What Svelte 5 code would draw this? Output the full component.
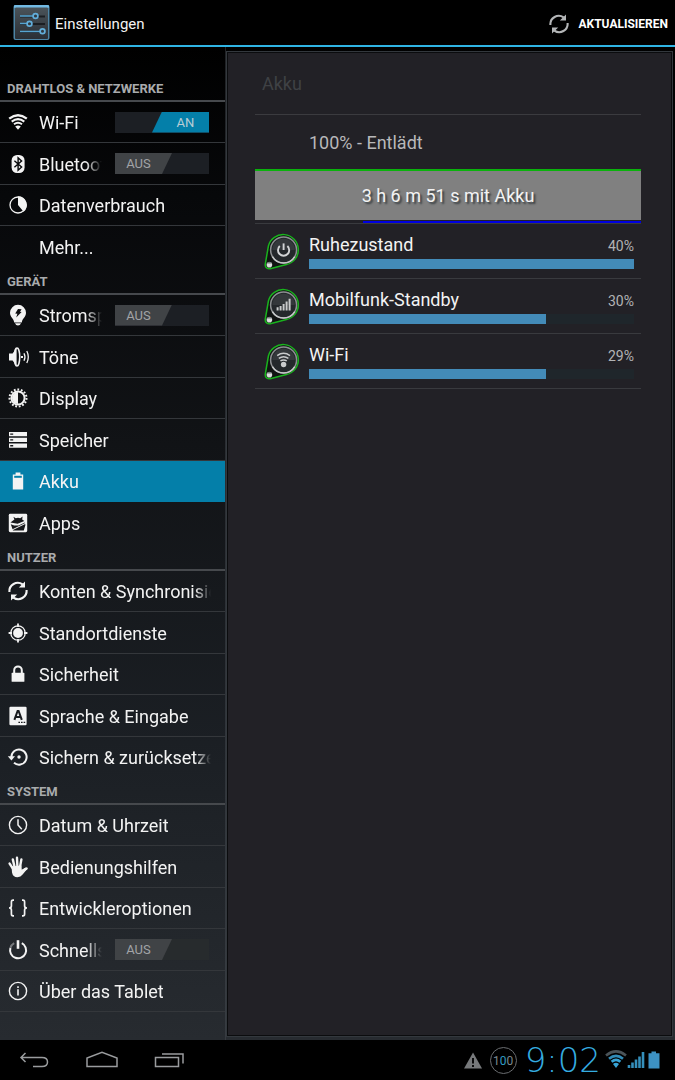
<script>
  let sections = $state([
    {
      title: 'DRAHTLOS & NETZWERKE',
      items: [
        { icon: 'wifi', label: 'Wi-Fi', on: true },
        { icon: 'bluetooth', label: 'Bluetooth', on: false },
        { icon: 'data', label: 'Datenverbrauch' },
        { icon: '', label: 'Mehr...' }
      ]
    },
    {
      title: 'GERÄT',
      items: [
        { icon: 'bulb', label: 'Stromsparen', on: false },
        { icon: 'sound', label: 'Töne' },
        { icon: 'display', label: 'Display' },
        { icon: 'storage', label: 'Speicher' },
        { icon: 'battery', label: 'Akku', active: true },
        { icon: 'apps', label: 'Apps' }
      ]
    },
    {
      title: 'NUTZER',
      items: [
        { icon: 'sync', label: 'Konten & Synchronisierung' },
        { icon: 'location', label: 'Standortdienste' },
        { icon: 'lock', label: 'Sicherheit' },
        { icon: 'language', label: 'Sprache & Eingabe' },
        { icon: 'restore', label: 'Sichern & zurücksetzen' }
      ]
    },
    {
      title: 'SYSTEM',
      items: [
        { icon: 'clock', label: 'Datum & Uhrzeit' },
        { icon: 'hand', label: 'Bedienungshilfen' },
        { icon: 'braces', label: 'Entwickleroptionen' },
        { icon: 'power', label: 'Schnellstart', on: false, dim: true },
        { icon: 'info', label: 'Über das Tablet' }
      ]
    }
  ]);

  const usage = [
    { icon: 'power', label: 'Ruhezustand', percent: '40%', width: 100 },
    { icon: 'signal', label: 'Mobilfunk-Standby', percent: '30%', width: 73 },
    { icon: 'wifi', label: 'Wi-Fi', percent: '29%', width: 73 }
  ];
</script>

{#snippet syncArrows()}
  <g fill="none" stroke="currentColor" stroke-width="2.1">
    <path d="M1.4 11A8.4 8.4 0 0 1 14.6 3.4" />
    <path d="M18.6 9A8.4 8.4 0 0 1 5.4 16.6" />
  </g>
  <path d="M17 0.4v6.2h-6.2z M3 19.6v-6.2h6.2z" fill="currentColor" />
{/snippet}

{#snippet menuIcon(name)}
  <svg class="icon" viewBox="0 0 20 20" aria-hidden="true">
    {#if name === 'wifi'}
      <g fill="none" stroke="currentColor">
        <path d="M1.2 6.6Q10 0 18.8 6.6" stroke-width="2.4" />
        <path d="M3.7 9.6Q10 4.6 16.3 9.6" stroke-width="2" />
        <path d="M6 12.3Q10 9.2 14 12.3" stroke-width="2" />
      </g>
      <path d="M7.2 14.6Q10 12.4 12.8 14.6L10 17.8z" fill="currentColor" />
    {:else if name === 'bluetooth'}
      <rect x="3.6" y="1" width="13" height="18" rx="5.4" fill="currentColor" />
      <path d="M6.4 6.8l7.2 6.2-3.5 3.2V3.8l3.5 3.2-7.2 6.2" fill="none" stroke="#08090b" stroke-width="1.4" />
    {:else if name === 'data'}
      <circle cx="10" cy="10" r="8" fill="none" stroke="currentColor" stroke-width="1.3" />
      <path d="M10 10V1.2A8.800 8.800 0 0 1 15.600 16.800z" fill="currentColor" />
    {:else if name === 'bulb'}
      <path d="M10 -0.2A8 8 0 0 0 2 7.8C2 12 5.8 13.6 6.2 17.4H13.8C14.2 13.6 18 12 18 7.8A8 8 0 0 0 10 -0.2z M7 18.2H13Q12.2 20.400 10 20.400T7 18.200z" fill="currentColor" />
      <path d="M10 4l3.600 0.200-1.600 2.600 1.600 0.200-5.400 5.600 1.200-3.800-2.200-0.400z" fill="#0d0e10" />
    {:else if name === 'sound'}
      <path d="M1 6.4h3.6L8.6 1v18L4.6 13.6H1z" fill="currentColor" />
      <ellipse cx="9" cy="10" rx="2.7" ry="9" fill="none" stroke="currentColor" stroke-width="1.5" />
      <rect x="13" y="9" width="2" height="2" fill="currentColor" />
      <path d="M16 6.200Q18 10 16 13.800M18.800 4Q21.800 10 18.800 16" fill="none" stroke="currentColor" stroke-width="1.300" />
    {:else if name === 'display'}
      <circle cx="10" cy="10" r="8.500" fill="none" stroke="currentColor" stroke-width="2" stroke-dasharray="1.800 1.760" />
      <circle cx="10" cy="10" r="6.600" fill="none" stroke="currentColor" stroke-width="2" />
      <path d="M10 4a6 6 0 0 0 0 12z" fill="currentColor" />
    {:else if name === 'storage'}
      <path d="M1 2h18v4.200H1zM1 7.800h18V12H1zM1 13.600h18v4.200H1z" fill="currentColor" />
      <path d="M2.200 4.100h3M2.200 9.900h3M2.200 15.700h3" stroke="#141518" stroke-width="1.400" />
    {:else if name === 'battery'}
      <path d="M7.600 1.600h4.800v1.800h2.800v15H4.800v-15h2.800z" fill="currentColor" />
      <path d="M6.200 4.800h7.600v2H6.200z" fill="#0480a8" />
    {:else if name === 'apps'}
      <rect x="0.800" y="0.800" width="18.400" height="18.400" rx="1.400" fill="currentColor" />
      <path d="M2.400 9.400L6.400 6.400 5.400 3.800 7.800 5.200Q10 4.200 12.200 5.200L14.600 3.400 14.200 6.400 16.400 8 9.600 10.800z" fill="#17181b" />
      <path d="M2.800 11.200l3.400 1.400L10.600 12.400 16.800 9.400 17.400 12 15.800 17.600H5z" fill="#17181b" />
      <path d="M2.800 17.600L17.400 10.400" stroke="currentColor" stroke-width="1" />
    {:else if name === 'sync'}
      {@render syncArrows()}
    {:else if name === 'location'}
      <circle cx="10" cy="10" r="4.900" fill="currentColor" />
      <circle cx="10" cy="10" r="7.200" fill="none" stroke="currentColor" stroke-width="1.300" />
      <path d="M10 0.600V4M10 16v3.400M0.600 10H4M16 10h3.400" stroke="currentColor" stroke-width="1.800" />
    {:else if name === 'lock'}
      <path d="M6.200 10V6.200a3.800 3.800 0 0 1 7.600 0V10" fill="none" stroke="currentColor" stroke-width="2" />
      <rect x="3.600" y="8.800" width="12.800" height="9" rx="0.600" fill="currentColor" />
    {:else if name === 'language'}
      <rect x="1.400" y="0.800" width="17.200" height="18.400" rx="1.200" fill="currentColor" />
      <path d="M6.400 13.800L9.600 5h1L13.800 13.800M7.600 11h5" fill="none" stroke="#191b1f" stroke-width="2" />
      <path d="M10.400 16.400h1.600M13 16.400h1.600M15.600 16.400h1.600" stroke="#191b1f" stroke-width="1.400" />
    {:else if name === 'restore'}
      <path d="M3.400 10A7.600 7.600 0 1 1 6 15.800" fill="none" stroke="currentColor" stroke-width="2" />
      <path d="M-0.200 9.200h7.200L3.400 13.400z" fill="currentColor" />
      <circle cx="11" cy="10" r="1.700" fill="currentColor" />
    {:else if name === 'clock'}
      <circle cx="10" cy="10" r="8.600" fill="none" stroke="currentColor" stroke-width="1.400" />
      <path d="M10 4.200V10l3.800 4.200" fill="none" stroke="currentColor" stroke-width="1.500" />
    {:else if name === 'hand'}
      <g fill="none" stroke="currentColor" stroke-width="2.400" stroke-linecap="round">
        <path d="M5.200 12L1.600 6.600M6.600 10L4.800 2.400M9.400 9.600L9 0.800M12 10L13.400 2.400M14.600 14L18.600 11.400" />
      </g>
      <path d="M3.600 9.400L13.400 8.400 13.800 12.800 17.600 10.400 19.200 12 14.600 17.600Q12.800 20.200 9.400 20.200 5 20.200 4 15.400z" fill="currentColor" />
    {:else if name === 'braces'}
      <path d="M6 2.200H5Q3.400 2.200 3.400 4v4Q3.400 10 1 10 3.400 10 3.400 12v4Q3.400 17.800 5 17.800H6M14 2.200h1Q16.600 2.200 16.600 4v4Q16.600 10 19 10 16.600 10 16.600 12v4Q16.600 17.800 15 17.800H14" fill="none" stroke="currentColor" stroke-width="1.700" />
    {:else if name === 'power'}
      <path d="M13.800 3.200A8 8 0 1 1 2.400 8" fill="none" stroke="currentColor" stroke-width="2" />
      <path d="M2.400 8A8 8 0 0 1 6.200 3.200" fill="none" stroke="currentColor" stroke-width="2" opacity="0.400" />
      <path d="M10 0.200v8.600" stroke="currentColor" stroke-width="2.600" />
    {:else if name === 'info'}
      <circle cx="10" cy="10" r="8.600" fill="none" stroke="currentColor" stroke-width="1.400" />
      <path d="M10 8.200v6.200M10 5.200v1.800" stroke="currentColor" stroke-width="1.600" />
    {/if}
  </svg>
{/snippet}

<div class="screen">
  <header class="bar">
    <svg class="logo" viewBox="0 0 37 37" aria-hidden="true">
      <defs>
        <linearGradient id="plate" x1="0" y1="0" x2="0" y2="1">
          <stop offset="0" stop-color="#4a5359" />
          <stop offset="1" stop-color="#2a2f35" />
        </linearGradient>
      </defs>
      <rect x="0.500" y="1" width="36" height="35" rx="2" fill="#4d84a4" />
      <rect x="1" y="1" width="35" height="3" rx="1" fill="#72b9e2" />
      <rect x="2" y="3.500" width="33" height="31.500" rx="1" fill="url(#plate)" />
      <path d="M7 12.500h25M7 20h25M7 28h25" stroke="#1b1e22" stroke-width="2" />
      <path d="M7 12h15M7 19.500h9M7 27.500h21" stroke="#56a5d2" stroke-width="1.500" />
      <g fill="#303940" stroke="#62aeda" stroke-width="1.700">
        <circle cx="22.500" cy="12" r="2.400" />
        <circle cx="16.500" cy="19.800" r="2.400" />
        <circle cx="29.500" cy="27.200" r="2.400" />
      </g>
    </svg>
    <h1>Einstellungen</h1>
    <button class="refresh" type="button">
      <svg viewBox="0 0 20 20" aria-hidden="true">{@render syncArrows()}</svg>
      AKTUALISIEREN
    </button>
  </header>

  <div class="body">
    <nav class="menu">
      {#each sections as section}
        <h2>{section.title}</h2>
        <ul>
          {#each section.items as item}
            <li class:active={item.active}>
              <a href="#{item.label}" aria-current={item.active ? 'page' : undefined}>
                {@render menuIcon(item.icon)}
                <span class="name">{item.label}</span>
              </a>
              {#if item.on !== undefined}
                <label class="switch" class:on={item.on} class:dim={item.dim}>
                  <input type="checkbox" role="switch" aria-label={item.label} bind:checked={item.on} />
                  <span>{item.on ? 'AN' : 'AUS'}</span>
                </label>
              {/if}
            </li>
          {/each}
        </ul>
      {/each}
    </nav>

    <main class="panel">
      <h2>Akku</h2>
      <p class="state">100% - Entlädt</p>
      <div class="chart">
        <div class="area">3 h 6 m 51 s mit Akku</div>
        <div class="trace"></div>
      </div>
      <ul class="usage">
        {#each usage as entry}
          <li>
            <svg class="badge" viewBox="0 0 36 38" aria-hidden="true">
              <path d="M1.200 31.500L4.400 13A15.200 15.200 0 1 1 22.400 31.600L6.200 35.700A4 4 0 0 1 1.200 31.500z" fill="#101312" stroke="#19b21d" stroke-width="1.500" />
              <circle cx="19.600" cy="17" r="13" fill="#24282b" stroke="#8d9092" stroke-width="1.500" />
              <path d="M8.400 23.600A13 13 0 0 0 30.800 23.600" fill="none" stroke="#c6c8c9" stroke-width="1.500" />
              <path d="M8.400 17a11.200 11.200 0 0 1 22.400 0z" fill="#34383b" />
              <circle cx="5.400" cy="31.800" r="2.800" fill="#dcdede" />
              <path d="M2.800 30.600a2.800 2.800 0 0 1 5.200 0z" fill="#777b7d" />
              {#if entry.icon === 'power'}
                <path d="M15.800 13a5.600 5.600 0 1 0 7.600 0" fill="none" stroke="#d2d4d5" stroke-width="1.900" />
                <path d="M19.600 10.400v6.600" stroke="#d2d4d5" stroke-width="1.900" />
              {:else if entry.icon === 'signal'}
                <path d="M13.600 22.500v-3.300M16.600 22.500v-4.600M19.600 22.500v-6.400M22.600 22.500v-9M25.600 22.500V10.700" stroke="#c9cbcc" stroke-width="2" />
              {:else}
                <g fill="none" stroke="#c9cbcc" stroke-width="1.500">
                  <path d="M13.200 12.600Q19.600 8 26 12.600M14.800 15.400Q19.600 12 24.400 15.400M16.400 18Q19.600 15.800 22.800 18" />
                </g>
                <circle cx="19.600" cy="21.500" r="2.700" fill="#c9cbcc" />
              {/if}
            </svg>
            <div class="info">
              <div class="line"><span>{entry.label}</span><span class="percent">{entry.percent}</span></div>
              <div class="track"><div class="fill" style="width: {entry.width}%"></div></div>
            </div>
          </li>
        {/each}
      </ul>
    </main>
  </div>

  <footer class="system">
    <button type="button" aria-label="Zurück">
      <svg viewBox="0 0 32 20"><path d="M7.500 3L3 7.500 7.500 12M3 7.500H24Q29.500 7.500 29.500 12T24 16.500H15" /></svg>
    </button>
    <button type="button" aria-label="Startseite">
      <svg viewBox="0 0 32 20"><path d="M1 16.500V8L16 2.300 31 8V16.500z" /></svg>
    </button>
    <button type="button" aria-label="Letzte Apps">
      <svg viewBox="0 0 32 20"><path d="M1.500 7.500H24.500V16.500H1.500zM8 4H29V13.500" /></svg>
    </button>
    <div class="tray">
      <svg class="warn" viewBox="0 0 18 17" aria-hidden="true">
        <path d="M9 0.500L18 16.500H0z" fill="#77797b" />
        <path d="M9 6v5.500M9 13v2" stroke="#000" stroke-width="1.800" />
      </svg>
      <span class="level">1<b>0</b>0</span>
      <time>9:02</time>
      <svg class="net" viewBox="0 0 56 20" aria-hidden="true">
        <g fill="none" stroke-width="2.600">
          <path d="M1 5.400Q11 -2.600 21 5.400" stroke="#4a5358" />
          <path d="M4 8.800Q11 2.800 18 8.800" stroke="#318cb8" />
          <path d="M6.600 11.800Q11 8 15.400 11.800" stroke="#37a4d6" />
        </g>
        <path d="M8 14Q11 11.600 14 14L11 18z" fill="#37a4d6" />
        <path d="M24 18v-3M27.500 18v-5.500M31 18v-8.500M34.500 18V6.500M38 18V2" stroke="#348fbb" stroke-width="2.600" />
        <path d="M46.500 1.500h4.500v1.800h3.500V18.500H43.500V3.300h3z" fill="#3d92c4" />
      </svg>
    </div>
  </footer>
</div>

<style>
  :global(body) {
    margin: 0;
    background: #000;
  }

  .screen {
    display: flex;
    flex-direction: column;
    min-height: 100vh;
    font-family: Roboto, "Liberation Sans", sans-serif;
    color: #f3f3f3;
    background: #000;
  }

  h1, h2, p, ul {
    margin: 0;
    padding: 0;
    list-style: none;
  }

  button {
    border: 0;
    background: none;
    font: inherit;
    color: inherit;
    cursor: pointer;
  }

  .bar {
    display: flex;
    align-items: center;
    height: 45px;
    padding: 0 7px 0 13px;
    border-bottom: 2px solid #2fb4e4;
  }

  .logo {
    width: 37px;
    height: 37px;
    margin-right: 5px;
  }

  h1 {
    flex: 1;
    padding-top: 2px;
    font-size: 15px;
    font-weight: 400;
  }

  .refresh {
    display: flex;
    align-items: center;
    gap: 9px;
    padding: 2px 0 0;
    font-size: 12px;
    font-weight: 700;
    color: #fff;
  }

  .refresh svg {
    width: 20px;
    height: 20px;
    color: #b4b6b8;
  }

  .body {
    display: flex;
    flex: 1;
    background: linear-gradient(#000, #07080a 15%, #111316 40%, #1b1f24 70%, #272b30);
  }

  .menu {
    flex: 0 0 226px;
    width: 226px;
    padding: 28px 0 20px;
    box-sizing: border-box;
    border-right: 1px solid rgba(80, 86, 92, 0.4);
  }

  .menu h2 {
    height: 27px;
    box-sizing: border-box;
    padding: 6px 7px 0;
    border-bottom: 2px solid #46494d;
    font-size: 13px;
    line-height: 16px;
    font-weight: 700;
    color: #a9abad;
    white-space: nowrap;
  }

  .menu li {
    display: flex;
    align-items: center;
    height: 41px;
    box-sizing: border-box;
    padding: 0 14px 0 8px;
    border-bottom: 1px solid #34373b;
  }

  .menu li:nth-child(even) {
    height: 42px;
  }

  .menu ul:not(:last-child) li:last-child {
    border-bottom-color: transparent;
  }

  .menu .active {
    background: #047fa9;
    border-bottom-color: #047fa9;
  }

  .menu a {
    display: flex;
    flex: 1;
    align-items: center;
    min-width: 0;
    gap: 11px;
    color: inherit;
    text-decoration: none;
  }

  .icon {
    flex: none;
    width: 20px;
    height: 20px;
    overflow: visible;
  }

  .name {
    flex: 1;
    overflow: hidden;
    padding-top: 2px;
    font-size: 18px;
    line-height: 24px;
    white-space: nowrap;
    mask-image: linear-gradient(to left, transparent, #000 16px);
  }

  .switch {
    position: relative;
    display: flex;
    flex: none;
    width: 94px;
    height: 21px;
    margin: 0 2px 0 13px;
    background: #1c1f24;
    font-size: 13px;
    line-height: 21px;
    text-align: center;
    color: #a2a4a6;
    cursor: pointer;
  }

  .switch input {
    position: absolute;
    inset: 0;
    width: 100%;
    height: 100%;
    margin: 0;
    opacity: 0;
    cursor: pointer;
  }

  .switch span {
    width: 57px;
    padding-right: 10px;
    box-sizing: border-box;
    background: #404346;
    clip-path: polygon(0 0, 100% 0, calc(100% - 10px) 100%, 0 100%);
  }

  .switch.on span {
    margin-left: auto;
    padding: 0 0 0 10px;
    background: #047fa9;
    color: #b9cdd6;
    clip-path: polygon(10px 0, 100% 0, 100% 100%, 0 100%);
  }

  .switch.dim {
    background: #272b2d;
  }

  .panel {
    flex: 1;
    min-width: 0;
    margin: 4px 2px 3px 0;
    padding: 10px 31px 0 28px;
    border: 1px solid #33383d;
    box-shadow: inset 0 0 0 1px #0b0c0e;
    background: #222126;
  }

  .panel h2 {
    padding: 10px 7px 18px;
    border-bottom: 1px solid #3b3b3f;
    font-size: 18px;
    line-height: 24px;
    font-weight: 400;
    color: #3f4145;
  }

  .state {
    padding: 16px 54px 14px;
    font-size: 18px;
    line-height: 24px;
    color: #b8b8ba;
  }

  .chart {
    border-bottom: 1px solid #393a3e;
  }

  .area {
    border-top: 2px solid #0ab20c;
    background: #808080;
    font-size: 18px;
    line-height: 48px;
    padding-top: 1px;
    margin-bottom: 1px;
    text-align: center;
    text-shadow: 2px 2px 2px #33393d;
  }

  .trace {
    height: 2px;
    margin-left: 28%;
    background: #0000e0;
  }

  .usage li {
    display: flex;
    height: 54px;
    padding: 0 7px 0 9px;
    border-bottom: 1px solid #393a3e;
  }

  .badge {
    width: 36px;
    height: 38px;
    margin: 9px 9px 0 0;
  }

  .info {
    flex: 1;
    padding-top: 9px;
  }

  .line {
    display: flex;
    align-items: baseline;
    justify-content: space-between;
    height: 26px;
    font-size: 18px;
    line-height: 24px;
  }

  .percent {
    font-size: 14px;
    color: #b2b3b5;
  }

  .track {
    background: #1f262b;
  }

  .fill {
    height: 10px;
    background: #438bb8;
  }

  .system {
    display: flex;
    align-items: center;
    height: 40px;
    padding: 0 14px 0 18px;
    background: #000;
  }

  .system button {
    width: 32px;
    height: 20px;
    margin-right: 36px;
    padding: 0;
  }

  .system button svg {
    display: block;
    width: 32px;
    height: 20px;
    fill: none;
    stroke: #9a9c9e;
    stroke-width: 1.5;
  }

  .tray {
    display: flex;
    align-items: center;
    margin-left: auto;
  }

  .warn {
    width: 18px;
    height: 17px;
    margin-right: 8px;
  }

  .level {
    width: 25px;
    height: 25px;
    margin-right: 8px;
    border: 1px solid #6a6d70;
    border-radius: 50%;
    font-family: "Liberation Sans Narrow", Roboto, sans-serif;
    font-size: 12px;
    line-height: 26px;
    text-align: center;
    color: #7c8a90;
  }

  .level b {
    font-weight: 400;
    color: #2f9bc4;
  }

  time {
    margin-right: 4px;
    font-family: "DejaVu Sans Light", "DejaVu Sans", sans-serif;
    font-size: 34px;
    font-weight: 200;
    line-height: 40px;
    color: #35ade0;
  }

  .net {
    width: 56px;
    height: 20px;
  }
</style>
